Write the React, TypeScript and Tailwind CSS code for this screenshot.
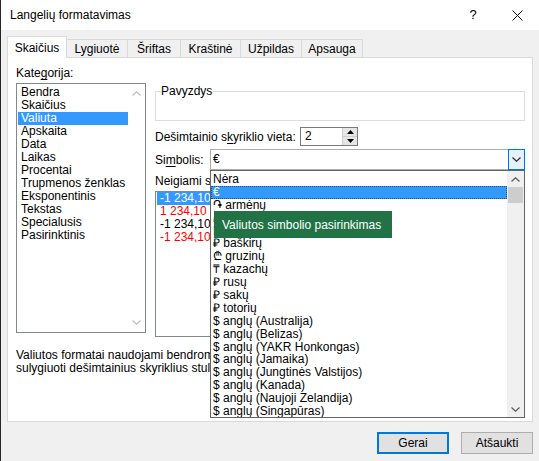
import React from 'react';

// Format Cells dialog (Lithuanian Excel) — "Skaičius" tab with currency symbol dropdown open

const TABS = [
  { label: 'Skaičius', w: 'w-[60px]', active: true },
  { label: 'Lygiuotė', w: 'w-[61px]' },
  { label: 'Šriftas', w: 'w-[53px]' },
  { label: 'Kraštinė', w: 'w-[60px]' },
  { label: 'Užpildas', w: 'w-[61px]' },
  { label: 'Apsauga', w: 'w-[61px]' },
];

const CATEGORIES = [
  'Bendra', 'Skaičius', 'Valiuta', 'Apskaita', 'Data', 'Laikas', 'Procentai',
  'Trupmenos ženklas', 'Eksponentinis', 'Tekstas', 'Specialusis', 'Pasirinktinis',
];

const NEGATIVE = [
  { text: '-1 234,10 €', cls: 'bg-[#3399ff] text-white' },
  { text: '1 234,10 €', cls: 'text-[#ff0000]' },
  { text: '-1 234,10 €', cls: 'text-black' },
  { text: '-1 234,10 €', cls: 'text-[#ff0000]' },
];

// rows 4 and 5 sit under the tooltip, only their symbol edge peeks out
const SYMBOLS = [
  'Nėra', '€', '֏ armėnų', '₼', 'Br', '₽ baškirų', '₾ gruzinų',
  '₸ kazachų', '₽ rusų', '₽ sakų', '₽ totorių', '$ anglų (Australija)', '$ anglų (Belizas)',
  '$ anglų (YAKR Honkongas)', '$ anglų (Jamaika)', '$ anglų (Jungtinės Valstijos)',
  '$ anglų (Kanada)', '$ anglų (Naujoji Zelandija)', '$ anglų (Singapūras)',
];

function Chevron({ up, color }: { up?: boolean; color: string }) {
  return (
    <svg width="9" height="5" viewBox="0 0 9 5">
      <path d={up ? 'M0.5 4.5 L4.5 0.8 L8.5 4.5' : 'M0.5 0.5 L4.5 4.2 L8.5 0.5'} fill="none" stroke={color} strokeWidth="1.3" />
    </svg>
  );
}

export default function App() {
  return (
    <div className="w-[539px] h-[461px] overflow-hidden flex flex-col bg-[#f0f0f0] border-l border-[#262626] text-[12px] text-black font-['Liberation_Sans',Arial,sans-serif]">
      {/* title bar */}
      <div className="h-[30px] shrink-0 bg-white flex items-center pl-[9px]">
        <span>Langelių formatavimas</span>
        <div className="ml-auto flex items-center">
          <span className="w-[44px] text-center text-[13px]">?</span>
          <span className="w-[44px] flex justify-center">
            <svg width="11" height="11" viewBox="0 0 11 11">
              <path d="M0.5 0.5 L10.5 10.5 M10.5 0.5 L0.5 10.5" stroke="#111" strokeWidth="1" />
            </svg>
          </span>
        </div>
      </div>

      {/* tabs */}
      <div className="h-[27px] shrink-0 flex items-end pl-[6px]">
        {TABS.map((t) =>
          t.active ? (
            <div key={t.label} className={`${t.w} h-[22px] -mb-px relative z-10 bg-white border-x border-t border-[#d9d9d9] flex items-center justify-center`}>
              {t.label}
            </div>
          ) : (
            <div key={t.label} className={`${t.w} h-[18px] border-t border-r border-[#d9d9d9] flex items-center justify-center`}>
              {t.label}
            </div>
          ),
        )}
      </div>

      {/* panel */}
      <div className="ml-[6px] w-[526px] h-[365px] shrink-0 bg-white border border-[#d9d9d9] pl-[8px] pt-[8px] flex flex-col">
        <div className="flex gap-[9px]">
          {/* category list */}
          <div className="w-[130px] flex flex-col">
            <div className="h-[15px] leading-[15px]">Kate<u className="underline-offset-2">g</u>orija:</div>
            <div className="mt-[2px] h-[250px] border border-[#828790] flex">
              <div className="flex-1 pt-[2px] pl-px">
                {CATEGORIES.map((c) => (
                  <div key={c} className={`h-[13px] leading-[13px] pl-[3px] whitespace-nowrap ${c === 'Valiuta' ? 'bg-[#3399ff] text-white' : ''}`}>
                    {c}
                  </div>
                ))}
              </div>
              <div className="w-[17px] flex flex-col items-center justify-between py-[7px]">
                <Chevron up color="#c4c4c4" />
                <Chevron color="#c4c4c4" />
              </div>
            </div>
          </div>

          {/* right side */}
          <div className="w-[370px] flex flex-col">
            <div className="mt-[25px] h-[30px] relative border border-[#dcdcdc]">
              <span className="absolute -top-[8px] left-[5px] bg-white pr-px leading-[14px]">Pavyzdys</span>
            </div>

            <div className="mt-[6px] h-[19px] flex items-center">
              <span className="w-[145px]">Dešimtainio s<u className="underline-offset-2">k</u>yriklio vieta:</span>
              <div className="w-[58px] h-[19px] border border-[#7a7a7a] flex">
                <span className="flex-1 pl-[4px] leading-[17px]">2</span>
                <div className="w-[15px] flex flex-col border-l border-[#cfcfcf] bg-[#e6e6e6]">
                  <div className="flex-1 flex items-center justify-center border-b border-[#cfcfcf]">
                    <svg width="7" height="4" viewBox="0 0 7 4"><path d="M0 4 L3.5 0 L7 4 Z" fill="#000" /></svg>
                  </div>
                  <div className="flex-1 flex items-center justify-center">
                    <svg width="7" height="4" viewBox="0 0 7 4"><path d="M0 0 L3.5 4 L7 0 Z" fill="#000" /></svg>
                  </div>
                </div>
              </div>
            </div>

            <div className="mt-[3px] h-[21px] flex items-center">
              <span className="w-[55px]">Si<u className="underline-offset-2">m</u>bolis:</span>
              <div className="relative w-[315px] h-[21px] border border-[#adadad] flex">
                <span className="flex-1 pl-[2px] leading-[19px]">€</span>
                <div className="w-[17px] -my-px -mr-px border border-[#0078d7] bg-[#e5f1fb] flex items-center justify-center">
                  <Chevron color="#333" />
                </div>

                {/* open dropdown */}
                <div className="absolute -left-px top-[20px] w-[315px] h-[248px] z-20 bg-white border border-[#646464] flex overflow-hidden">
                  <div className="flex-1 pt-[2px]">
                    {SYMBOLS.map((s) => (
                      <div
                        key={s}
                        className={`h-[12.9px] leading-[12.9px] pl-[2px] whitespace-nowrap ${s === '€' ? 'bg-[#3399ff] text-white outline-1 outline-dotted outline-[#1b4f8a] -outline-offset-1' : ''}`}
                      >
                        {s}
                      </div>
                    ))}
                  </div>
                  <div className="w-[17px] bg-[#f0f0f0] flex flex-col items-center">
                    <div className="h-[16px] flex items-center">
                      <Chevron up color="#606060" />
                    </div>
                    <div className="w-[15px] h-[16px] bg-[#cdcdcd]" />
                    <div className="mt-auto h-[16px] flex items-center">
                      <Chevron color="#606060" />
                    </div>
                  </div>

                  {/* tooltip */}
                  <div className="absolute left-[3px] top-[40px] w-[178px] h-[27px] bg-[#217346] text-white pl-[8px] flex items-center">
                    Valiutos simbolio pasirinkimas
                  </div>
                </div>
              </div>
            </div>

            {/* the part right of x=210 lies under the open dropdown */}
            <div className="mt-[4px] h-[15px] leading-[15px] w-[55px] overflow-hidden whitespace-nowrap">Neigiami skaičiai:</div>
            <div className="mt-[2px] h-[146px] border border-[#828790] pl-px">
              <div className="w-[53px] overflow-hidden">
                {NEGATIVE.map((n, i) => (
                  <div key={i} className={`h-[13px] leading-[13px] pl-[3px] whitespace-nowrap ${n.cls}`}>
                    {n.text}
                  </div>
                ))}
              </div>
            </div>
          </div>
        </div>

        <div className="mt-[12px] leading-[13px] whitespace-nowrap w-[194px] overflow-hidden">
          <div>Valiutos formatai naudojami bendroms piniginėms reikšmėms. Norėdami</div>
          <div>sulygiuoti dešimtainius skyriklius stulpelyje, naudokite apskaitos formatus.</div>
        </div>
      </div>

      {/* buttons */}
      <div className="mt-[10px] flex justify-end gap-[12px] pr-[6px]">
        <button className="w-[72px] h-[22px] bg-[#e1e1e1] border-2 border-[#0078d7]">Gerai</button>
        <button className="w-[72px] h-[22px] bg-[#e1e1e1] border border-[#adadad]">Atšaukti</button>
      </div>
    </div>
  );
}
